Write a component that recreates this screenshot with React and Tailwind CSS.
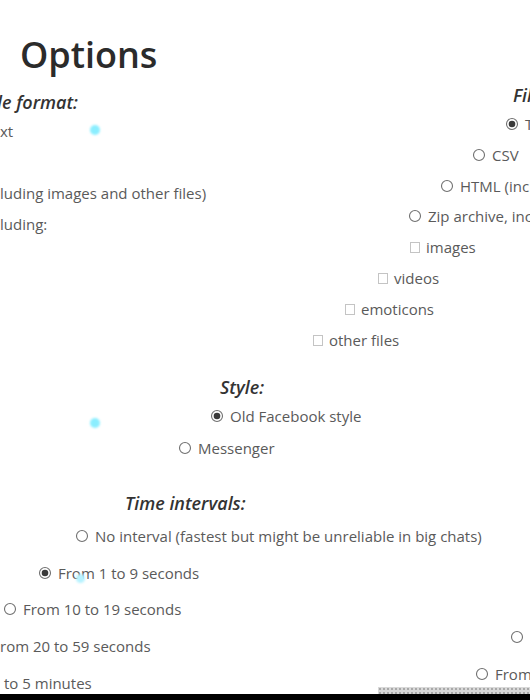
import React from "react";

const font = { fontFamily: '"Open Sans", "Noto Sans", sans-serif' };

function Radio({ checked }) {
  return (
    <svg width="14" height="14" viewBox="0 0 14 14" className="shrink-0">
      <circle cx="7" cy="7" r="5.5" fill="white" stroke="#707070" strokeWidth="1.1" />
      {checked && <circle cx="7" cy="7" r="3.3" fill="#3a3a3a" />}
    </svg>
  );
}

function Box() {
  return <span className="inline-block w-[10px] h-[11px] shrink-0 border border-[#c4c4c4] bg-white" />;
}

function Item({ x, children, className = "" }) {
  return (
    <div className={`flex items-center h-[20px] whitespace-nowrap text-[15px] leading-[20px] text-[#5a5a5a] ${className}`} style={{ paddingLeft: x }}>
      {children}
    </div>
  );
}

function Opt({ checked, box, label }) {
  return (
    <span className="flex items-center gap-[6px]">
      {box ? <Box /> : <Radio checked={checked} />}
      <span>{label}</span>
    </span>
  );
}

function Split({ leftW, drop, left, right, head }) {
  const txt = head
    ? "text-[18px] leading-[24px] font-semibold italic text-[#333]"
    : "text-[15px] leading-[20px] text-[#5a5a5a]";
  return (
    <div className={`flex items-start whitespace-nowrap ${txt}`}>
      <div className="shrink-0 overflow-hidden" style={{ width: leftW, paddingTop: drop }}>
        {left}
      </div>
      <div className="flex items-center shrink-0">{right}</div>
    </div>
  );
}

export default function App() {
  return (
    <div className="relative w-[530px] h-[700px] overflow-hidden bg-white flex flex-col" style={font}>
      {/* faint cyan blobs */}
      <span className="absolute left-[90px] top-[125px] w-[10px] h-[10px] rounded-full bg-[#8beeff] blur-[1px]" />
      <span className="absolute left-[90px] top-[418px] w-[10px] h-[10px] rounded-full bg-[#8beeff] blur-[1px]" />
      <span className="absolute left-[76px] top-[574px] w-[9px] h-[9px] rounded-full bg-[#b6f2ff] blur-[1px]" />

      <div className="mt-[33px] pl-[20px] h-[44px] text-[36px] leading-[44px] font-semibold text-[#2b2b2b] whitespace-nowrap">
        Options
      </div>

      <div className="mt-[6px]">
        <Split head leftW={513} drop={7} left={<span className="ml-[-3px]">le format:</span>} right={<span>File format:</span>} />
      </div>

      <div>
        <Split leftW={505} drop={7} left={<span>xt</span>} right={<Opt checked label="Text" />} />
      </div>

      <Item x={472} className="mt-[4px]"><Opt label="CSV" /></Item>

      <div className="mt-[11px]">
        <Split leftW={440} drop={7} left={<span>luding images and other files)</span>} right={<Opt label="HTML (including images and other files)" />} />
      </div>

      <div className="mt-[3px]">
        <Split leftW={408} drop={8} left={<span>luding:</span>} right={<Opt label="Zip archive, including:" />} />
      </div>

      <Item x={410} className="mt-[3px]"><Opt box label="images" /></Item>
      <Item x={378} className="mt-[11px]"><Opt box label="videos" /></Item>
      <Item x={345} className="mt-[11px]"><Opt box label="emoticons" /></Item>
      <Item x={313} className="mt-[11px]"><Opt box label="other files" /></Item>

      <div className="mt-[25px] pl-[220px] h-[24px] text-[18px] leading-[24px] font-semibold italic text-[#333] whitespace-nowrap">
        Style:
      </div>
      <Item x={210} className="mt-[7px]"><Opt checked label="Old Facebook style" /></Item>
      <Item x={178} className="mt-[12px]"><Opt label="Messenger" /></Item>

      <div className="mt-[33px] pl-[125px] h-[24px] text-[18px] leading-[24px] font-semibold italic text-[#333] whitespace-nowrap">
        Time intervals:
      </div>
      <Item x={75} className="mt-[11px]"><Opt label="No interval (fastest but might be unreliable in big chats)" /></Item>
      <Item x={38} className="mt-[17px]"><Opt checked label="From 1 to 9 seconds" /></Item>
      <Item x={3} className="mt-[16px]"><Opt label="From 10 to 19 seconds" /></Item>

      <div className="mt-[8px]">
        <Split leftW={510} drop={9} left={<span>rom 20 to 59 seconds</span>} right={<Opt label="From 20 to 59 seconds" />} />
      </div>
      <div className="mt-[8px]">
        <Split leftW={475} drop={9} left={<span className="ml-[4px]">to 5 minutes</span>} right={<Opt label="From 1 to 5 minutes" />} />
      </div>

      <div className="mt-[-6px] flex h-[7px] pl-[378px]">
        <div className="flex-1 h-full bg-[#d9d9d9] bg-[radial-gradient(#a8a8a8_0.8px,transparent_0.9px)] bg-[length:4px_4px]" />
      </div>
      <div className="h-[6px] bg-black" />
    </div>
  );
}
